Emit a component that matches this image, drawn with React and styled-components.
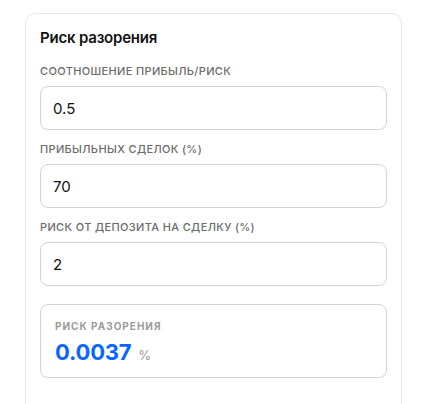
import React, { useState } from "react";
import styled, { createGlobalStyle } from "styled-components";

const GlobalStyle = createGlobalStyle`
  body {
    margin: 0;
    background: #ffffff;
    font-family: Inter, "Noto Sans", sans-serif;
  }
`;

const Page = styled.div`
  padding: 13px 27px 0 25px;
`;

const Card = styled.section`
  border: 1px solid #e5e7eb;
  border-radius: 10px;
  padding: 14px 14px 40px;
  background: #fff;
`;

const Title = styled.h3`
  margin: 0 0 15px;
  font-size: 15px;
  line-height: 20px;
  font-weight: 600;
  letter-spacing: -0.2px;
  color: #111111;
`;

const Field = styled.div`
  display: flex;
  flex-direction: column;
  margin-bottom: 11px;
`;

const Label = styled.label`
  font-size: 11px;
  line-height: 16px;
  font-weight: 500;
  letter-spacing: 0.35px;
  text-transform: uppercase;
  color: #6b6b6b;
  margin-bottom: 7px;
`;

const Input = styled.input`
  box-sizing: border-box;
  height: 44px;
  width: 100%;
  padding: 0 12px;
  border: 1px solid #d4d4d8;
  border-radius: 8px;
  font-family: inherit;
  font-size: 15px;
  color: #111111;
  outline: none;
`;

const Result = styled.div`
  margin-top: 18px;
  border: 1px solid #d4d4d8;
  border-radius: 8px;
  padding: 14px 14px 11px;
`;

const ResultLabel = styled.div`
  font-size: 10px;
  line-height: 14px;
  font-weight: 700;
  letter-spacing: 1px;
  text-transform: uppercase;
  color: #9a9a9a;
  margin-bottom: 5px;
`;

const ResultRow = styled.div`
  display: flex;
  align-items: baseline;
  gap: 7px;
`;

const Value = styled.span`
  font-size: 22px;
  line-height: 28px;
  font-weight: 700;
  letter-spacing: -0.2px;
  color: #0a66ff;
`;

const Unit = styled.span`
  font-size: 13px;
  color: #9a9a9a;
`;

const fields = [
  { id: "ratio", label: "Соотношение прибыль/риск", value: "0.5" },
  { id: "win", label: "Прибыльных сделок (%)", value: "70" },
  { id: "risk", label: "Риск от депозита на сделку (%)", value: "2" },
];

export default function App() {
  const [values, setValues] = useState(
    Object.fromEntries(fields.map((f) => [f.id, f.value]))
  );

  return (
    <>
      <GlobalStyle />
      <Page>
        <Card>
          <Title>Риск разорения</Title>
          {fields.map((f) => (
            <Field key={f.id}>
              <Label htmlFor={f.id}>{f.label}</Label>
              <Input
                id={f.id}
                type="text"
                value={values[f.id]}
                onChange={(e) => setValues({ ...values, [f.id]: e.target.value })}
              />
            </Field>
          ))}
          <Result>
            <ResultLabel>Риск разорения</ResultLabel>
            <ResultRow>
              <Value>0.0037</Value>
              <Unit>%</Unit>
            </ResultRow>
          </Result>
        </Card>
      </Page>
    </>
  );
}
